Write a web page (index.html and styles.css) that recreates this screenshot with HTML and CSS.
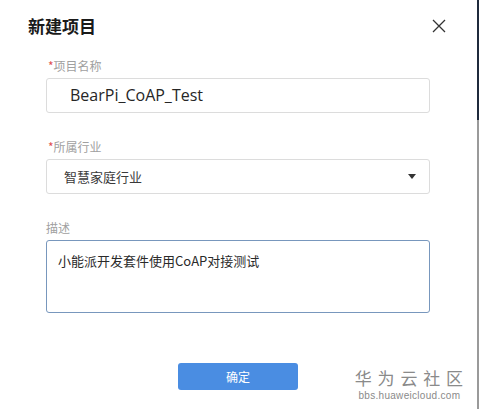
FILE: index.html
```html
<!DOCTYPE html>
<html lang="zh-CN">
<head>
  <meta charset="UTF-8">
  <title>新建项目</title>
  <link rel="stylesheet" href="styles.css">
</head>
<body>
  <div class="dialog">
    <div class="dialog-header">
      <div class="dialog-title">新建项目</div>
      <svg class="close" width="14" height="14" viewBox="0 0 14 14">
        <path d="M1 1 L13 13 M13 1 L1 13" stroke="#333" stroke-width="1.3" fill="none"/>
      </svg>
    </div>

    <div class="form">
      <!-- Project name -->
      <div class="label"><span class="req">*</span>项目名称</div>
      <div class="field name-field">BearPi_CoAP_Test</div>

      <!-- Industry -->
      <div class="label label-2"><span class="req">*</span>所属行业</div>
      <div class="field select-field">
        <span>智慧家庭行业</span>
        <span class="caret"></span>
      </div>

      <!-- Description -->
      <div class="label label-3">描述</div>
      <div class="field textarea-field">小能派开发套件使用CoAP对接测试</div>
    </div>

    <div class="footer">
      <button class="btn-ok">确定</button>
    </div>

    <div class="watermark">
      <div class="wm-cn">华 为 云 社 区</div>
      <div class="wm-en">bbs.huaweicloud.com</div>
    </div>
  </div>
</body>
</html>
```

FILE: styles.css
```css
body {
  margin: 0;
  padding: 0;
  background: #ffffff;
  font-family: 'Noto Sans CJK SC', 'Noto Sans', sans-serif;
}

.dialog {
  position: relative;
  width: 477px;
  height: 409px;
  border-right: 2px solid #9a9a9a;
  background: #ffffff;
}

.dialog::after {
  content: '';
  position: absolute;
  top: 0;
  right: -2px;
  width: 2px;
  height: 120px;
  background: #1f2a3c;
}

.dialog-header {
  display: flex;
  justify-content: space-between;
  align-items: center;
  padding: 12px 31px 0 28px;
  height: 26px;
}

.dialog-title {
  font-size: 17px;
  font-weight: bold;
  color: #1a1a1a;
}

.close {
  margin-top: 1px;
}

.form {
  padding: 0 0 0 46px;
  width: 384px;
}

.label {
  font-size: 12px;
  color: #a0a0a0;
  margin-top: 19px;
  height: 18px;
  line-height: 18px;
  padding-left: 2px;
}

.label-2 {
  margin-top: 25px;
}

.label-3 {
  margin-top: 25px;
  padding-left: 0;
}

.req {
  color: #e05050;
}

.field {
  box-sizing: border-box;
  border: 1px solid #dcdcdc;
  border-radius: 3px;
  margin-top: 3px;
}

.name-field {
  height: 35px;
  line-height: 33px;
  padding-left: 23px;
  font-family: 'Open Sans', 'Noto Sans', sans-serif;
  font-size: 16px;
  color: #262626;
}

.select-field {
  display: flex;
  justify-content: space-between;
  align-items: center;
  height: 35px;
  padding: 0 13px 0 17px;
  font-size: 13px;
  color: #3a3a3a;
}

.caret {
  width: 0;
  height: 0;
  border-left: 4px solid transparent;
  border-right: 4px solid transparent;
  border-top: 5px solid #333;
}

.textarea-field {
  height: 73px;
  border-color: #7897bd;
  padding: 10px 11px;
  font-size: 13px;
  line-height: 20px;
  color: #2a2a2a;
}

.footer {
  display: flex;
  justify-content: flex-start;
  padding-left: 178px;
  margin-top: 50px;
}

.btn-ok {
  width: 120px;
  height: 27px;
  border: none;
  border-radius: 3px;
  background: #4a8de2;
  color: #ffffff;
  font-family: 'Noto Sans CJK SC', sans-serif;
  font-size: 12px;
  padding: 0;
}

.watermark {
  position: absolute;
  right: 13px;
  bottom: 8px;
  text-align: center;
  color: #8a8a8a;
}

.wm-cn {
  font-size: 17px;
  line-height: 18px;
  letter-spacing: 1px;
}

.wm-en {
  font-family: 'Liberation Sans', sans-serif;
  font-size: 10px;
  line-height: 11px;
  margin-top: 3px;
  letter-spacing: 0.3px;
}
```
